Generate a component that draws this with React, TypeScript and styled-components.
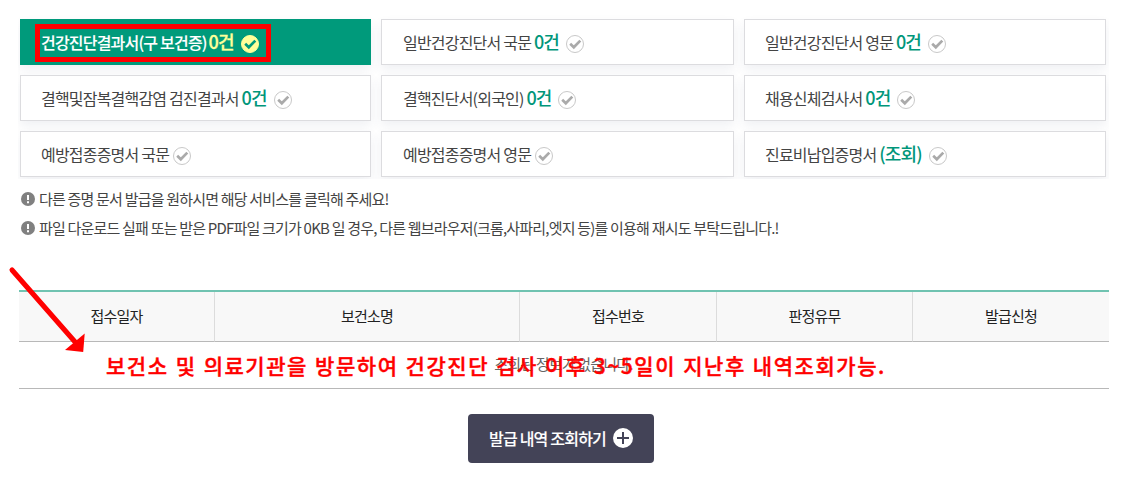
import styled, { createGlobalStyle, css } from "styled-components";

const GlobalStyle = createGlobalStyle`
  * {
    box-sizing: border-box;
  }

  body {
    margin: 0;
    background: #fff;
    color: #444;
    font-family: "Noto Sans CJK KR", "Noto Sans", sans-serif;
    letter-spacing: -0.05em;
  }
`;

const Page = styled.main`
  position: relative;
  width: 1133px;
  height: 481px;
  overflow: hidden;
`;
const ServiceList = styled.ul`
  display: grid;
  grid-template-columns: 351px 353px 362px;
  grid-auto-rows: 46px;
  gap: 10px;
  width: 1091px;
  height: 179px;
  margin: 0 0 0 18px;
  padding: 19px 0 0 2px;
  overflow: hidden;
  list-style: none;
`;
const Count = styled.strong`
  font-size: 18px;
  font-weight: 500;
  color: #00967a;
`;
const ServiceItem = styled.li<{ $active?: boolean }>`
  position: relative;
  padding-left: 20px;
  border: 1px solid #dcdcdf;
  background: #fff;
  box-shadow: 0 5px 10px rgba(70, 80, 120, 0.08);
  font-size: 16px;
  line-height: 42px;
  white-space: nowrap;

  &:nth-child(3n + 2) {
    padding-left: 21px;
  }

  ${(p) =>
    p.$active &&
    css`
      border-color: #009a7b;
      background: #009a7b;
      color: #fff;
      font-weight: 500;
      -webkit-text-stroke: 0.1px;

      ${Count} {
        color: #ffff99;
        margin-left: -1px;
        -webkit-text-stroke: 0.3px;
      }
    `}
`;
const CheckSvg = styled.svg`
  width: 18px;
  height: 18px;
  margin-left: 4px;
  vertical-align: -4px;
`;
const Highlight = styled.div`
  position: absolute;
  top: 4px;
  left: 14px;
  width: 236px;
  height: 38px;
  border: 5px solid #f00;
`;
const NoteList = styled.ul`
  margin: 6px 0 0 21px;
  padding: 0;
  list-style: none;
`;
const Note = styled.li`
  display: flex;
  align-items: center;
  gap: 4px;
  height: 29px;
  padding-bottom: 2px;
  font-size: 15px;
  white-space: nowrap;
`;
const Table = styled.table`
  width: 1090px;
  margin: 47px 0 0 19px;
  border-collapse: separate;
  border-spacing: 0;
  border-top: 2px solid #70c3b1;
  table-layout: fixed;
  font-size: 15px;
`;
const HeadCell = styled.th`
  height: 50px;
  padding: 0 0 2px;
  border-bottom: 1px solid #b8b8b8;
  border-left: 1px solid #dcdcdc;
  background: #f8f8f8;
  color: #222;
  font-weight: 400;

  &:first-child {
    border-left: 0;
  }
`;
const EmptyCell = styled.td`
  height: 47px;
  padding: 0 1px 3px 0;
  border-bottom: 1px solid #b8b8b8;
  color: #666;
  text-align: center;
`;
const SearchButton = styled.button`
  display: flex;
  align-items: center;
  justify-content: center;
  gap: 7px;
  width: 186px;
  height: 49px;
  margin: 25px 0 0 468px;
  padding: 0 0 2px;
  border: 0;
  border-radius: 4px;
  background: #434357;
  color: #fff;
  font-family: inherit;
  font-size: 16px;
  font-weight: 500;
  letter-spacing: -0.05em;
  -webkit-text-stroke: 0.1px;
`;
const Arrow = styled.svg`
  position: absolute;
  top: 260px;
  left: 0;
`;
const Comment = styled.p`
  position: absolute;
  top: 349px;
  left: 106px;
  margin: 0;
  color: #f00;
  font-size: 21px;
  font-weight: 500;
  line-height: 32px;
  letter-spacing: 1.55px;
  word-spacing: 0.8px;
  white-space: nowrap;
  -webkit-text-stroke: 0.4px;
`;

const services = [
  { name: "건강진단결과서(구 보건증)", count: "0건", active: true },
  { name: "일반건강진단서 국문", count: "0건" },
  { name: "일반건강진단서 영문", count: "0건" },
  { name: "결핵및잠복결핵감염 검진결과서", count: "0건" },
  { name: "결핵진단서(외국인)", count: "0건" },
  { name: "채용신체검사서", count: "0건" },
  { name: "예방접종증명서 국문" },
  { name: "예방접종증명서 영문" },
  { name: "진료비납입증명서", count: "(조회)" },
];

const notes = [
  "다른 증명 문서 발급을 원하시면 해당 서비스를 클릭해 주세요!",
  "파일 다운로드 실패 또는 받은 PDF파일 크기가 0KB 일 경우, 다른 웹브라우저(크롬,사파리,엣지 등)를 이용해 재시도 부탁드립니다.!",
];

const columns = [
  { title: "접수일자", width: 195 },
  { title: "보건소명", width: 305 },
  { title: "접수번호", width: 197 },
  { title: "판정유무", width: 196 },
  { title: "발급신청", width: 197 },
];

function CheckIcon({ active }: { active?: boolean }) {
  return (
    <CheckSvg viewBox="0 0 18 18">
      <circle
        cx="9"
        cy="9"
        r="8.5"
        fill={active ? "#ffff99" : "#fff"}
        stroke={active ? "#ffff99" : "#c8c8c8"}
      />
      <path
        d="M4.2 8.8 7.8 12.3 14.3 5.6"
        fill="none"
        stroke={active ? "#009a7b" : "#aaa"}
        strokeWidth="2.7"
      />
    </CheckSvg>
  );
}

function NoticeIcon() {
  return (
    <svg width="14" height="14" viewBox="0 0 14 14">
      <circle cx="7" cy="7" r="7" fill="#808080" />
      <path d="M6 3h2v5H6zM6 9.2h2v2H6z" fill="#fff" />
    </svg>
  );
}

export default function App() {
  return (
    <Page>
      <GlobalStyle />
      <ServiceList>
        {services.map(({ name, count, active }) => (
          <ServiceItem key={name} $active={active}>
            {name}
            {count && " "}
            {/* stays in the row without a count too, it keeps the baseline */}
            <Count>{count}</Count>
            {count && " "}
            <CheckIcon active={active} />
            {active && <Highlight />}
          </ServiceItem>
        ))}
      </ServiceList>
      <NoteList>
        {notes.map((note) => (
          <Note key={note}>
            <NoticeIcon />
            {note}
          </Note>
        ))}
      </NoteList>
      <Table>
        <colgroup>
          {columns.map(({ title, width }) => (
            <col key={title} width={width} />
          ))}
        </colgroup>
        <thead>
          <tr>
            {columns.map(({ title }) => (
              <HeadCell key={title}>{title}</HeadCell>
            ))}
          </tr>
        </thead>
        <tbody>
          <tr>
            <EmptyCell colSpan={5}>조회된 정보가 없습니다.</EmptyCell>
          </tr>
        </tbody>
      </Table>
      <SearchButton>
        발급 내역 조회하기
        <svg width="20" height="20" viewBox="0 0 20 20">
          <circle cx="10" cy="10" r="10" fill="#fff" />
          <path d="M10 4v12M4 10h12" stroke="#434357" strokeWidth="2" />
        </svg>
      </SearchButton>
      <Arrow width="100" height="100" viewBox="0 0 100 100">
        <path d="M12 10 76 83" stroke="#f00" strokeWidth="5" strokeLinecap="round" />
        <path d="M84.7 73.5 83.2 92 65 90z" fill="#f00" />
      </Arrow>
      <Comment>보건소 및 의료기관을 방문하여 건강진단 검사 이후 3~5일이 지난후 내역조회가능.</Comment>
    </Page>
  );
}
